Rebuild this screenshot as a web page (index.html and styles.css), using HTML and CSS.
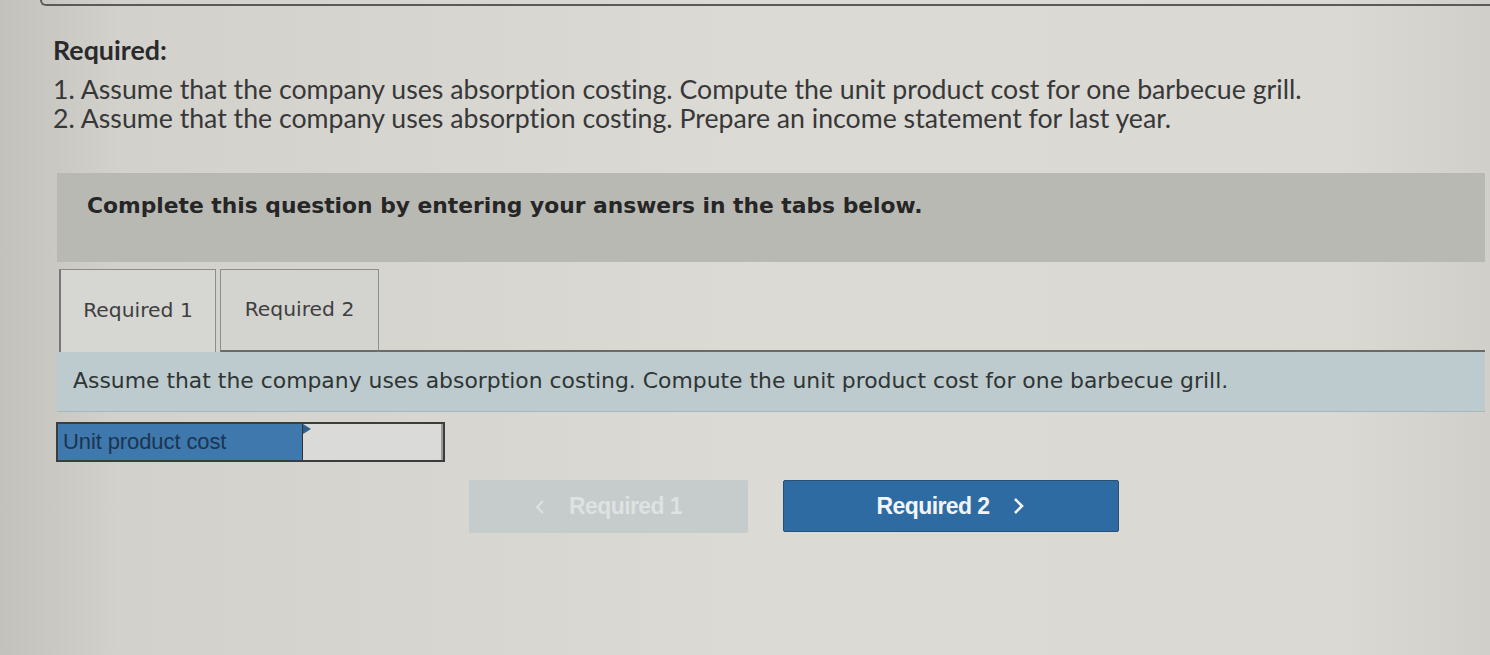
FILE: index.html
```html
<!DOCTYPE html>
<html lang="en">
<head>
<meta charset="utf-8">
<title>Required</title>
<link rel="stylesheet" href="styles.css">
</head>
<body>
<div class="page">
  <div class="top-rule"></div>
  <section class="required">
    <h2 class="required-title">Required:</h2>
    <p class="req-line req-line-1">1. Assume that the company uses absorption costing. Compute the unit product cost for one barbecue grill.</p>
    <p class="req-line req-line-2">2. Assume that the company uses absorption costing. Prepare an income statement for last year.</p>
  </section>
  <div class="instruction">Complete this question by entering your answers in the tabs below.</div>
  <div class="tabs">
    <div class="tab tab-active">Required 1</div>
    <div class="tab">Required 2</div>
    <div class="tab-fill"></div>
  </div>
  <div class="prompt">Assume that the company uses absorption costing. Compute the unit product cost for one barbecue grill.</div>
  <div class="answer-row">
    <div class="answer-label">Unit product cost</div>
    <div class="answer-input"><span class="flag"></span></div>
  </div>
  <div class="nav">
    <div class="nav-btn nav-prev"><svg class="chev chev-left" width="10" height="16" viewBox="0 0 10 16"><polyline points="8,2 2,8 8,14" fill="none" stroke="currentColor" stroke-width="2"/></svg>Required 1</div>
    <div class="nav-btn nav-next">Required 2<svg class="chev chev-right" width="12" height="18" viewBox="0 0 12 18"><polyline points="2,2 9,9 2,16" fill="none" stroke="currentColor" stroke-width="2.6"/></svg></div>
  </div>
</div>
</body>
</html>
```
FILE: styles.css
```css
html, body {
  margin: 0;
  padding: 0;
}
body {
  width: 1490px;
  height: 655px;
  overflow: hidden;
  background: linear-gradient(90deg, #c2c1bb 0%, #d2d1cc 8%, #dbdad5 50%, #dad9d4 90%, #d0cfca 100%);
  color: #2d2d2d;
}
.page {
  height: 655px;
}
.top-rule {
  height: 4px;
  margin-left: 40px;
  border-left: 2px solid #5a5a5a;
  border-bottom: 2px solid #5a5a5a;
  border-bottom-left-radius: 8px;
}
.required {
  padding: 29px 0 0 53px;
  font-family: Lato, "Open Sans", sans-serif;
  font-variant-ligatures: none;
  color: #383838;
}
.required-title {
  margin: 0;
  font-size: 26.8px;
  font-weight: 700;
  line-height: 30px;
  color: #2a2a2a;
}
.req-line {
  margin: 0;
  font-size: 26.7px;
  line-height: 29px;
}
.req-line-1 {
  margin-top: 10px;
}
.instruction {
  margin: 40px 5px 0 57px;
  height: 89px;
  box-sizing: border-box;
  padding: 18px 0 0 30px;
  background: #b9b9b4;
  font-family: "DejaVu Sans", Verdana, sans-serif;
  font-weight: 700;
  font-size: 21.8px;
  line-height: 30px;
  color: #262626;
}
.tabs {
  display: flex;
  margin: 7px 5px 0 59px;
  height: 83px;
}
.tab {
  box-sizing: border-box;
  width: 158px;
  border: 1px solid #8d8d8a;
  border-bottom: 2px solid #6a6a68;
  background: #d3d3cf;
  font-family: "DejaVu Sans", Verdana, sans-serif;
  font-size: 20.3px;
  color: #3f3f3f;
  display: flex;
  align-items: center;
  justify-content: center;
  padding-bottom: 2px;
}
.tab-active {
  width: 157px;
  border-left: 2px solid #777;
  border-bottom: none;
  background: #d6d6d2;
  margin-right: 4px;
}
.tab-active + .tab {
  width: 159px;
}
.tab-fill {
  flex: 1;
  border-bottom: 2px solid #6a6a68;
}
.prompt {
  margin: 0 5px 0 57px;
  height: 60px;
  box-sizing: border-box;
  padding: 14px 0 0 16px;
  background: #bdcbce;
  border-bottom: 1px solid #aab7ba;
  font-family: "DejaVu Sans", Verdana, sans-serif;
  font-size: 21.9px;
  line-height: 30px;
  color: #2f3535;
}
.answer-row {
  display: flex;
  margin: 10px 0 0 56px;
  width: 389px;
  height: 40px;
  box-sizing: border-box;
  border: 2px solid #3a3d40;
}
.answer-label {
  width: 244px;
  background: #3f78ad;
  font-family: "Liberation Sans", Arial, sans-serif;
  font-size: 22px;
  line-height: 36px;
  padding-left: 5px;
  box-sizing: border-box;
  color: #1b3550;
  letter-spacing: -0.1px;
}
.answer-input {
  flex: 1;
  position: relative;
  background: #dadbd8;
  border-left: 1px solid #333;
  border-right: 2px solid #9a9a98;
}
.flag {
  position: absolute;
  left: 0;
  top: 0;
  width: 0;
  height: 0;
  border-top: 5px solid transparent;
  border-bottom: 5px solid transparent;
  border-left: 8px solid #2f5f8c;
}
.nav {
  display: flex;
  gap: 35px;
  margin: 18px 0 0 469px;
}
.nav-btn {
  box-sizing: border-box;
  height: 53px;
  display: flex;
  align-items: center;
  justify-content: center;
  font-family: "Liberation Sans", Arial, sans-serif;
  font-size: 23px;
  font-weight: 700;
  letter-spacing: -0.6px;
}
.nav-prev {
  width: 279px;
  background: #c6cbcb;
  color: #dde2e2;
  border-radius: 2px;
}
.chev-left {
  margin-right: 24px;
}
.nav-next {
  width: 336px;
  height: 52px;
  background: #2f6ba3;
  color: #f2f5f8;
  border: 1px solid #24507a;
  border-radius: 2px;
}
.chev-right {
  margin-left: 24px;
}
```
